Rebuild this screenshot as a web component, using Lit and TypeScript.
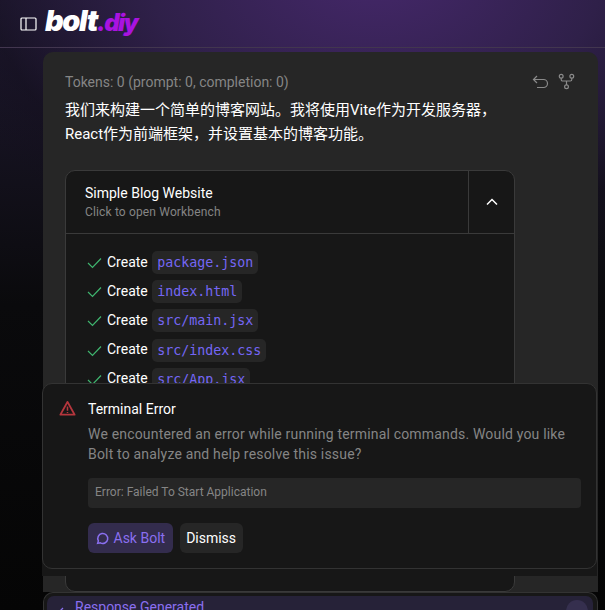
import { LitElement, html, css } from 'lit';
import { customElement } from 'lit/decorators.js';

const files = ['package.json', 'index.html', 'src/main.jsx', 'src/index.css', 'src/App.jsx'];

@customElement('app-root')
export class AppRoot extends LitElement {
  static styles = css`
    * {
      margin: 0;
      padding: 0;
      box-sizing: border-box;
    }

    :host {
      display: block;
      position: relative;
      width: 605px;
      height: 610px;
      overflow: hidden;
      font-family: Roboto, 'Noto Sans CJK SC', sans-serif;
      font-size: 14px;
      color: #fff;
      background:
        radial-gradient(ellipse 460px 330px at 62% -40px, #46286c 0%, #2f2049 50%, rgba(20, 14, 30, 0.4) 85%, transparent 100%),
        linear-gradient(180deg, #1e1930 0%, #0a0a0c 50%, #050505 100%);
    }

    .header {
      display: flex;
      align-items: center;
      gap: 8px;
      height: 48px;
      padding-left: 20px;
      border-bottom: 1px solid #42364f;
    }

    .toggle {
      width: 17px;
      height: 14px;
      display: block;
    }

    .logo {
      font-family: 'Inter', sans-serif;
      font-weight: 900;
      font-style: italic;
      font-size: 29px;
      letter-spacing: -1.4px;
      line-height: 1;
      margin-top: -6px;
    }

    .logo span {
      color: #a913e0;
      font-size: 24px;
      letter-spacing: -1.6px;
    }

    .main {
      padding: 4px 7px 0 43px;
    }

    .card {
      height: 540px;
      overflow: hidden;
      padding: 20px 22px 0;
      background: #262626;
      border-radius: 10px 10px 0 0;
    }

    .meta {
      display: flex;
      justify-content: space-between;
      color: #858585;
      height: 21px;
      line-height: 21px;
    }

    .actions {
      display: flex;
      gap: 9px;
      padding-right: 1px;
      color: #8a8a8a;
    }

    .actions svg {
      width: 17px;
      height: 17px;
      margin-top: 1px;
    }

    .message {
      margin-top: 5px;
      width: 440px;
      font-size: 15px;
      line-height: 24px;
    }

    .artifact {
      display: flex;
      flex-direction: column;
      width: 450px;
      height: 422px;
      margin-top: 24px;
      background: #171717;
      border: 1px solid #3a3a3a;
      border-radius: 10px;
    }

    .artifact-head {
      display: flex;
      height: 63px;
      flex: none;
      border-bottom: 1px solid #3a3a3a;
    }

    .artifact-title {
      flex: 1;
      padding: 13px 19px 0;
      line-height: 19px;
    }

    .artifact-title small {
      display: block;
      margin-top: 1px;
      font-size: 12px;
      line-height: 17px;
      letter-spacing: 0.15px;
      color: #858585;
    }

    .chevron {
      display: flex;
      align-items: center;
      justify-content: center;
      width: 46px;
      border-left: 1px solid #3a3a3a;
    }

    .chevron svg {
      width: 14px;
      height: 14px;
    }

    .steps {
      list-style: none;
      padding: 13px 21px;
    }

    .steps li {
      display: flex;
      align-items: center;
      height: 29.2px;
    }

    .check {
      width: 15px;
      height: 15px;
      margin-right: 5px;
      flex: none;
      margin-top: 2px;
    }

    code {
      margin-left: 4.5px;
      margin-top: 2px;
      padding: 0 5px;
      height: 23px;
      line-height: 23px;
      font-family: 'DejaVu Sans Mono', monospace;
      font-size: 13.3px;
      color: #7566f5;
      background: #262626;
      border-radius: 5px;
    }

    .toast-wrap {
      position: absolute;
      left: 42px;
      top: 383px;
      width: 555px;
      height: 193px;
      padding-bottom: 7px;
      background: linear-gradient(transparent 170px, #171717 170px);
    }

    .toast {
      display: flex;
      gap: 12px;
      height: 100%;
      padding: 15px 15px 0 16px;
      background: #171717;
      border: 1px solid #333;
      border-radius: 10px;
    }

    .warn {
      width: 17px;
      height: 17px;
      flex: none;
      margin-top: 1px;
    }

    .toast-body {
      flex: 1;
    }

    .toast-title {
      line-height: 20px;
    }

    .toast-text {
      margin-top: 6px;
      color: #858585;
      line-height: 19.5px;
      letter-spacing: 0.18px;
    }

    .toast-error {
      margin-top: 14px;
      height: 30px;
      padding: 0 7px;
      line-height: 28px;
      font-size: 12px;
      color: #858585;
      background: #262626;
      border-radius: 4px;
    }

    .buttons {
      display: flex;
      gap: 7px;
      margin-top: 15px;
    }

    .btn {
      display: flex;
      align-items: center;
      gap: 5px;
      height: 30px;
      padding: 0 6.5px;
      border-radius: 6px;
      background: #262626;
    }

    .btn-primary {
      padding: 0 7.5px;
      color: #8a6ff0;
      background: #332c4d;
    }

    .btn-primary svg {
      width: 13px;
      height: 13px;
    }

    .panel {
      height: 30px;
      padding: 3px 4px 0 3px;
      background: #171717;
      border: 1px solid #333;
      border-bottom: 0;
      border-radius: 10px 10px 0 0;
    }

    .response {
      display: flex;
      align-items: flex-start;
      height: 40px;
      padding: 3px 5px 0 8px;
      color: #8a6ff0;
      background: #262238;
      border-radius: 7px 7px 0 0;
    }

    .response svg {
      width: 12px;
      height: 12px;
      margin: 8px 8px 0 0;
    }

    .response span {
      flex: 1;
    }

    .round {
      display: block;
      width: 22px;
      height: 22px;
      margin-top: 1px;
      background: #352f4e;
      border-radius: 50%;
    }
  `;

  render() {
    return html`
      <div class="header">
        <svg class="toggle" viewBox="0 0 17 14" fill="none" stroke="#fff" stroke-width="1.2">
          <rect x="1" y="1" width="15" height="12" rx="1"></rect>
          <path d="M6 1v12"></path>
        </svg>
        <div class="logo">bolt<span>.diy</span></div>
      </div>
      <div class="main">
        <div class="card">
          <div class="meta">
            <span>Tokens: 0 (prompt: 0, completion: 0)</span>
            <div class="actions">
              <svg viewBox="0 0 17 17" fill="none" stroke="currentColor" stroke-width="1.2">
                <path d="M5 3 1.5 6.5 5 10M1.5 6.5H11.5a4 4 0 0 1 0 8H5"></path>
              </svg>
              <svg viewBox="0 0 17 17" fill="none" stroke="currentColor" stroke-width="1.2">
                <circle cx="3.2" cy="3.2" r="1.9"></circle>
                <circle cx="13.8" cy="3.2" r="1.9"></circle>
                <circle cx="8.5" cy="13.8" r="1.9"></circle>
                <path d="M3.2 5.1V6.5a1.5 1.5 0 0 0 1.5 1.5h7.6a1.5 1.5 0 0 0 1.5-1.5V5.1M8.5 8v3.9"></path>
              </svg>
            </div>
          </div>
          <p class="message">我们来构建一个简单的博客网站。我将使用Vite作为开发服务器，React作为前端框架，并设置基本的博客功能。</p>
          <div class="artifact">
            <div class="artifact-head">
              <div class="artifact-title">
                Simple Blog Website
                <small>Click to open Workbench</small>
              </div>
              <div class="chevron">
                <svg viewBox="0 0 14 14" fill="none" stroke="#fff" stroke-width="1.5">
                  <path d="M2 9.5 7 4.5l5 5"></path>
                </svg>
              </div>
            </div>
            <ul class="steps">
              ${files.map(file => html`
                <li>
                  <svg class="check" viewBox="0 0 15 15" fill="none" stroke="#3fb56f" stroke-width="1.2">
                    <path d="M1 8l4.5 4.5L14 3.5"></path>
                  </svg>
                  Create <code>${file}</code>
                </li>
              `)}
            </ul>
          </div>
        </div>
        <div class="panel">
          <div class="response">
            <svg viewBox="0 0 12 12" fill="none" stroke="currentColor" stroke-width="1.3">
              <path d="M8 1 3 6l5 5"></path>
            </svg>
            <span>Response Generated</span>
            <i class="round"></i>
          </div>
        </div>
      </div>
      <div class="toast-wrap">
        <div class="toast">
          <svg class="warn" viewBox="0 0 18 18" fill="none" stroke="#b5363d" stroke-width="2" stroke-linejoin="round">
            <path d="M9 2 1.5 15.5h15z"></path>
            <path d="M9 7v4.5M9 12.8v1" stroke-width="1.6"></path>
          </svg>
          <div class="toast-body">
            <div class="toast-title">Terminal Error</div>
            <p class="toast-text">We encountered an error while running terminal commands. Would you like Bolt to analyze and help resolve this issue?</p>
            <div class="toast-error">Error: Failed To Start Application</div>
            <div class="buttons">
              <div class="btn btn-primary">
                <svg viewBox="0 0 12 12" fill="none" stroke="currentColor" stroke-width="1.4">
                  <path d="M1.5 10.5l.7-2.3A4.6 4.6 0 1 1 4 10z"></path>
                </svg>
                Ask Bolt
              </div>
              <div class="btn">Dismiss</div>
            </div>
          </div>
        </div>
      </div>
    `;
  }
}
